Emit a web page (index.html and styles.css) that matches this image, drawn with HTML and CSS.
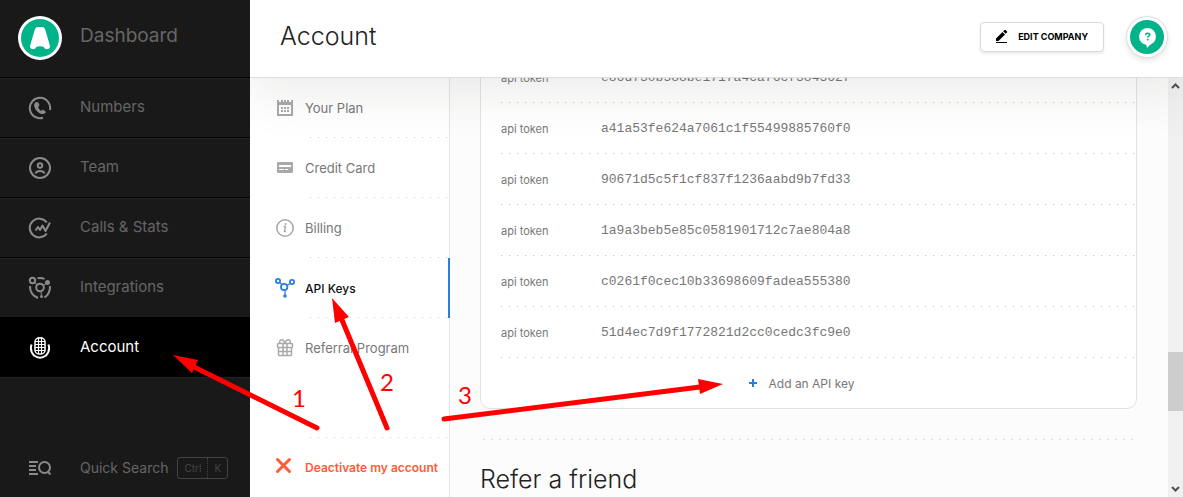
FILE: index.html
```
<!DOCTYPE html>
<html lang="en">
<head>
    <meta charset="utf-8">
    <title>Account</title>
    <link rel="stylesheet" href="styles.css">
</head>
<body>
    <nav class="sidebar">
        <a class="brand" href="#">
            <svg class="logo" width="44" height="44" viewBox="0 0 44 44">
                <circle cx="22" cy="22" r="22" fill="#fff"/>
                <circle cx="22" cy="22" r="19" fill="#00b388"/>
                <path d="M20 11h4q2.400 0 3.200 2.400l4.500 15.600q1 3.600-1.800 3.900l-1.800.1q-1.300 0-2-1.500-.5-1-1.600-1-2.500-.5-5 0-1.100 0-1.600 1-.7 1.500-2 1.500l-1.800-.1q-2.800-.3-1.800-3.900l4.500-15.600Q17.600 11 20 11z" fill="#fff"/>
            </svg>
            <span>Dashboard</span>
        </a>
        <a class="item" href="#">
            <svg width="24" height="24" viewBox="0 0 24 24" fill="none" stroke="#8a8a8a" stroke-width="2">
                <path d="M22 14A10.200 10.200 0 1 0 15 21.800"/>
                <path d="M7.500 6.200q-2 1.500-1.300 4 1.400 5 6 7.300 3.300 1.300 5.300-.7.800-.8-.2-1.600l-1.800-1.200q-.8-.5-1.500.2l-.9.700q-2.400-1.200-3-3.800l1-1.200q.5-.6.100-1.400l-1-2q-.8-1-1.700-.3z" fill="#8a8a8a" stroke="none"/>
            </svg>
            <span>Numbers</span>
        </a>
        <a class="item" href="#">
            <svg width="24" height="24" viewBox="0 0 24 24" fill="none" stroke="#8a8a8a" stroke-width="2">
                <circle cx="12" cy="12" r="10"/>
                <circle cx="12" cy="9.500" r="2.200"/>
                <path d="M7.500 17.500q1-2.500 4.500-2.500t4.500 2.500"/>
            </svg>
            <span>Team</span>
        </a>
        <a class="item" href="#">
            <svg width="24" height="24" viewBox="0 0 24 24" fill="none" stroke="#8a8a8a" stroke-width="2">
                <path d="M18.800 6.500a9.400 9.400 0 1 0 0 11"/>
                <path d="M7.500 14.500l2.500-3.500 2 3 2.500-4.500 3 5.500 4.500-8.500" stroke-linejoin="round"/>
            </svg>
            <span>Calls &amp; Stats</span>
        </a>
        <a class="item" href="#">
            <svg width="24" height="24" viewBox="0 0 24 24" fill="none" stroke="#8a8a8a" stroke-width="2">
                <circle cx="4.500" cy="4.500" r="2.700"/>
                <circle cx="12" cy="11.500" r="3.800"/>
                <circle cx="19.500" cy="6.500" r="2.500" fill="#8a8a8a" stroke="none"/>
                <circle cx="13.500" cy="20.500" r="1.500" fill="#8a8a8a" stroke="none"/>
                <path d="M9.500 2.300q4-1 7 .7M2 10q-.3 8.500 8 12M22 10q.3 8-5.500 11.500"/>
                <path d="M6.500 6.500l3 2.500M15 9.500l3-2M13 15l.5 5" stroke-width="1"/>
            </svg>
            <span>Integrations</span>
        </a>
        <a class="item current" href="#">
            <svg width="24" height="24" viewBox="0 0 24 24" fill="none" stroke="#fff" stroke-width="2">
                <path d="M3.500 8.500Q1.500 15 6 19.500q6 4.500 12 0 4.500-4.500 2.500-11"/>
                <rect x="7" y="2" width="10" height="16" rx="4" stroke-width="1.500"/>
                <path d="M10.500 1v17M13.500 1v17M7 5.500h10M7 8.500h10M7 11.500h10M7 14.500h10" stroke-width="1.200"/>
            </svg>
            <span>Account</span>
        </a>
        <a class="item search" href="#">
            <svg width="24" height="24" viewBox="0 0 24 24" fill="none" stroke="#8a8a8a" stroke-width="2">
                <path d="M1 6h9M1 10h7M1 14h7M1 18h9"/>
                <circle cx="16.500" cy="11.500" r="5.500"/>
                <path d="M19.500 15.500l3 3"/>
            </svg>
            <span>Quick Search</span>
            <span class="keys"><kbd>Ctrl</kbd><kbd>K</kbd></span>
        </a>
    </nav>

    <div class="main">
        <header class="header">
            <h1>Account</h1>
            <button class="edit" type="button">
                <svg width="12" height="14" viewBox="0 0 12 14">
                    <path d="M0 8.500L6.500 2l2.500 2.500L2.500 11H0zM7.200 1.300L8.500 0q.7-.4 1.300.2l1 1q.6.600.2 1.300L9.700 3.800z"/>
                    <path d="M0 12h11v1H0z"/>
                </svg>
                EDIT COMPANY
            </button>
            <button class="help" type="button" aria-label="Help">
                <svg width="34" height="34" viewBox="0 0 34 34">
                    <circle cx="17" cy="17" r="17" fill="#00b388"/>
                    <circle cx="17.500" cy="16.500" r="8.500" fill="#fff"/>
                    <path d="M16 24l1 4 5-5z" fill="#fff"/>
                    <path d="M15.700 15q0-1.800 2-1.800t2 1.600q0 1-1.200 1.500-.7.300-.7 1.200M17.800 18.800v1.600" fill="none" stroke="#00b388" stroke-width="1.600"/>
                </svg>
            </button>
        </header>

        <div class="body">
            <nav class="subnav">
                <a href="#">
                    <svg width="20" height="20" viewBox="0 0 20 20">
                        <path d="M2 2h2v2h2V2h8v2h2V2h2v16H2zM4 7v9h12V7zM8 2h1v2H8zM11 2h1v2h-1z" fill="#a9a9a9" fill-rule="evenodd"/>
                        <path d="M6 9h2v2H6zM9 9h2v2H9zM12 9h2v2h-2zM6 12h2v2H6zM9 12h2v2H9zM12 12h2v2h-2z" fill="#a9a9a9"/>
                    </svg>
                    <span>Your Plan</span>
                </a>
                <a href="#">
                    <svg width="20" height="20" viewBox="0 0 20 20">
                        <path d="M3 4h14q1 0 1 1v9q0 1-1 1H3q-1 0-1-1V5q0-1 1-1zM4 7v2h12V7zM4 11v1h5v-1zM10 11v1h3v-1z" fill="#a9a9a9" fill-rule="evenodd"/>
                    </svg>
                    <span>Credit Card</span>
                </a>
                <a href="#">
                    <svg width="20" height="20" viewBox="0 0 20 20">
                        <circle cx="10" cy="10" r="8.200" fill="none" stroke="#a9a9a9" stroke-width="1.600"/>
                        <path d="M8.500 8.500h2l-1 5h1.500" fill="none" stroke="#a9a9a9" stroke-width="1.400"/>
                        <circle cx="10.600" cy="6" r="1" fill="#a9a9a9"/>
                    </svg>
                    <span>Billing</span>
                </a>
                <a class="current" href="#">
                    <svg width="20" height="20" viewBox="0 0 20 20" fill="none" stroke="#2a7de1" stroke-width="1.800">
                        <circle cx="3" cy="3" r="2.100"/>
                        <circle cx="17" cy="4" r="2.100"/>
                        <circle cx="9.200" cy="9" r="3.200"/>
                        <path d="M4.500 4.500l2.500 2M12 7.500l3-2M10 12v6" stroke-width="1.200"/>
                        <circle cx="10" cy="18" r="1.800" fill="#2a7de1" stroke="none"/>
                    </svg>
                    <span>API Keys</span>
                </a>
                <a class="last" href="#">
                    <svg width="20" height="20" viewBox="0 0 20 20" fill="none" stroke="#a9a9a9" stroke-width="1.500">
                        <rect x="2.500" y="5.500" width="15" height="4" rx="1"/>
                        <path d="M3.500 9.500v7q0 1 1 1h11q1 0 1-1v-7M8 5.500v12M12 5.500v12M3.500 13.500h13"/>
                        <path d="M10 5.500Q9 1.500 6.500 1.700T5 5.500M10 5.500q1-4 3.500-3.800T15 5.500"/>
                    </svg>
                    <span>Referral Program</span>
                </a>
                <a class="deactivate" href="#">
                    <svg width="20" height="20" viewBox="0 0 20 20">
                        <path d="M2.500 2.500l12 12M14.500 2.500l-12 12" stroke="#ff5c35" stroke-width="3" stroke-linecap="round"/>
                    </svg>
                    <span>Deactivate my account</span>
                </a>
            </nav>

            <main class="content">
                <section class="card">
                    <dl>
                        <div class="token"><dt>api token</dt><dd>e86d730b588be1717a4ca76cf384362f</dd></div>
                        <div class="token"><dt>api token</dt><dd>a41a53fe624a7061c1f55499885760f0</dd></div>
                        <div class="token"><dt>api token</dt><dd>90671d5c5f1cf837f1236aabd9b7fd33</dd></div>
                        <div class="token"><dt>api token</dt><dd>1a9a3beb5e85c0581901712c7ae804a8</dd></div>
                        <div class="token"><dt>api token</dt><dd>c0261f0cec10b33698609fadea555380</dd></div>
                        <div class="token"><dt>api token</dt><dd>51d4ec7d9f1772821d2cc0cedc3fc9e0</dd></div>
                    </dl>
                    <button class="add" type="button">
                        <svg width="8" height="8" viewBox="0 0 8 8"><path d="M3 0h2v3h3v2H5v3H3V5H0V3h3z" fill="#2a7de1"/></svg>
                        Add an API key
                    </button>
                </section>
                <section class="refer">
                    <h2>Refer a friend</h2>
                </section>
            </main>

            <div class="scrollbar">
                <svg width="9" height="6" viewBox="0 0 9 6"><path d="M1 5l3.500-3.500L8 5" fill="none" stroke="#505050" stroke-width="2"/></svg>
                <div class="thumb"></div>
                <svg width="9" height="6" viewBox="0 0 9 6"><path d="M1 1l3.500 3.500L8 1" fill="none" stroke="#505050" stroke-width="2"/></svg>
            </div>
        </div>
    </div>

    <!-- numbered steps drawn over the page -->
    <svg class="steps" width="1183" height="497" viewBox="0 0 1183 497">
        <g stroke="#f00" stroke-width="5" stroke-linecap="round">
            <path d="M317 428L194 367"/>
            <path d="M387 428L342 320"/>
            <path d="M444 419L700 387"/>
        </g>
        <g fill="#f00">
            <path d="M173 355l25 5-6 13z"/>
            <path d="M332 298l17 19-14 6z"/>
            <path d="M723 384l-25-5 2 15z"/>
            <text x="292" y="407">1</text>
            <text x="380" y="391">2</text>
            <text x="458" y="404">3</text>
        </g>
    </svg>
</body>
</html>
```

FILE: styles.css
```
* {
    box-sizing: border-box;
    margin: 0;
    padding: 0;
}

body {
    display: flex;
    height: 100vh;
    overflow: hidden;
    position: relative;
    font-family: Inter, "Liberation Sans", sans-serif;
    font-size: 13px;
    color: #777;
    background: #fff;
}

a {
    color: inherit;
    text-decoration: none;
}

button {
    font-family: inherit;
    border: 0;
    background: none;
    cursor: pointer;
}

/* left sidebar */
.sidebar {
    flex: 0 0 250px;
    display: flex;
    flex-direction: column;
    background: #191919;
    color: #666;
    font-size: 15px;
}

.brand {
    display: flex;
    align-items: center;
    gap: 18px;
    height: 77px;
    padding: 0 18px 2px;
    font-size: 19px;
}

.brand span {
    padding-bottom: 4px;
}

.item {
    display: flex;
    align-items: center;
    gap: 28px;
    height: 60px;
    padding-left: 28px;
    border-top: 1px solid #000;
    box-shadow: inset 0 1px #222;
}

.item span {
    padding-bottom: 2px;
}

.item.current {
    background: #000;
    color: #fff;
    height: 61px;
    border-bottom: 1px solid #222;
    box-shadow: none;
}

.item.search {
    margin-top: auto;
    padding-top: 2px;
    border: 0;
    box-shadow: none;
    font-size: 14px;
}

.item .keys {
    display: flex;
    margin-left: -19px;
    padding: 0;
    border: 1px solid #444;
    border-radius: 3px;
    color: #444;
}

.keys kbd {
    padding: 0 6px;
    font-family: inherit;
    font-size: 10px;
    line-height: 20px;
}

.keys kbd + kbd {
    border-left: 1px dotted #444;
}

/* right part */
.main {
    flex: 1;
    min-width: 0;
    display: flex;
    flex-direction: column;
}

.header {
    flex: 0 0 78px;
    display: flex;
    align-items: center;
    position: relative;
    z-index: 1;
    padding: 0 16px 4px 30px;
    background: #fff;
    border-bottom: 1px solid #ddd;
    box-shadow: 0 14px 50px rgba(60, 60, 50, 0.1);
    clip-path: inset(0 0 -80px 0);
}

h1, h2 {
    font-size: 25px;
    font-weight: 300;
    line-height: 32px;
    color: #222;
}

h1 {
    margin-right: auto;
    padding-bottom: 2px;
}

.edit {
    display: flex;
    align-items: center;
    gap: 10px;
    height: 30px;
    padding: 0 15px;
    border: 1px solid #d8d8d8;
    border-radius: 4px;
    box-shadow: 0 2px 3px rgba(0, 0, 0, 0.08);
    background: #fff;
    font-size: 9px;
    font-weight: 700;
    color: #000;
}

.help {
    display: flex;
    margin-left: 23px;
    padding: 3px;
    border-radius: 50%;
    background: #fff;
    box-shadow: 0 0 1px 1px #ddd, 0 3px 6px rgba(0, 0, 0, 0.12);
}

.body {
    flex: 1;
    min-height: 0;
    display: flex;
}

.subnav {
    flex: 0 0 200px;
    display: flex;
    flex-direction: column;
    border-right: 1px solid #e5e5e5;
}

.subnav a {
    display: flex;
    align-items: center;
    gap: 10px;
    height: 60px;
    padding-left: 25px;
    background: repeating-linear-gradient(to right, #ccc 0 1px, transparent 1px 8px) 60px 100% / 139px 1px no-repeat;
}

.subnav .current {
    color: #111;
    font-size: 12px;
    font-weight: 500;
    margin-right: -1px;
    border-right: 2px solid #2a7de1;
}

.subnav .last {
    background: none;
}

.subnav .deactivate {
    margin-top: auto;
    background-position: 60px 0;
    color: #ff5c35;
    font-size: 12px;
    font-weight: 600;
}

.content {
    flex: 1;
    min-width: 0;
    display: flex;
    flex-direction: column;
    justify-content: flex-end;
    overflow: hidden;
    padding: 0 31px 0 30px;
    background: #fcfcfc;
}

.card {
    border: 1px solid #e2e2e2;
    border-radius: 10px;
    background: #fff;
    padding-left: 20px;
}

.token {
    display: flex;
    align-items: center;
    height: 51px;
    background: repeating-linear-gradient(to right, #bbb 0 1px, transparent 1px 8px) 0 100% / 100% 1px no-repeat;
}

.token dt {
    flex: 0 0 100px;
    font-size: 11px;
}

.token dd {
    font-family: "Liberation Mono", "Courier New", monospace;
    font-size: 13px;
}

.add {
    display: flex;
    align-items: center;
    justify-content: center;
    gap: 12px;
    width: 100%;
    height: 50px;
    padding-right: 34px;
    font-size: 12px;
    color: #777;
}

.refer {
    margin-top: 30px;
    padding: 24px 0 2px;
    background: repeating-linear-gradient(to right, #ddd 0 2px, transparent 2px 8px) 3px 0 / 100% 1px no-repeat;
}

.scrollbar {
    flex: 0 0 15px;
    display: flex;
    flex-direction: column;
    align-items: center;
    justify-content: space-between;
    padding: 5px 0;
    background: #f0f0f0;
}

.thumb {
    width: 100%;
    height: 59px;
    margin-top: 188px;
    background: #cdcdcd;
}

.steps {
    position: absolute;
    left: 0;
    top: 0;
    pointer-events: none;
    font-family: Lato, sans-serif;
    font-size: 24px;
}
```
